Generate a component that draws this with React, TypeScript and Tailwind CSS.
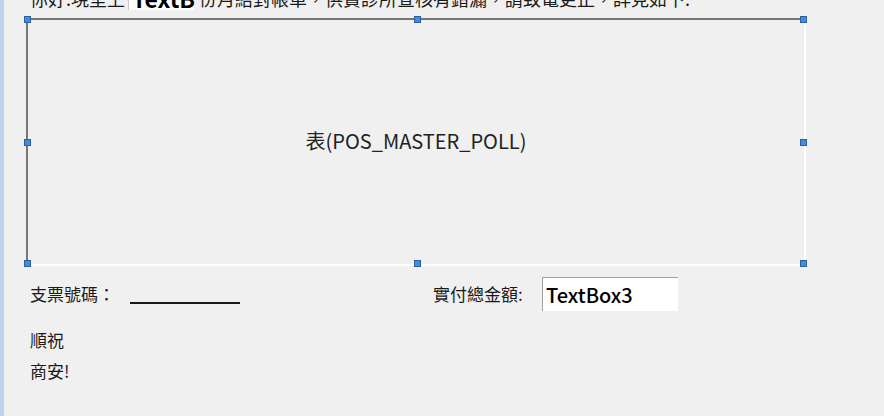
import React from "react";

const font = { fontFamily: '"Noto Sans CJK TC", "Noto Sans", sans-serif' };

function Handle({ className }: { className: string }) {
  return (
    <div
      className={`absolute w-[7px] h-[7px] bg-[#3d8ee0] border border-[#2f5f99] ${className}`}
    />
  );
}

export default function App() {
  return (
    <div
      className="w-[884px] h-[416px] bg-[#f0f0f0] flex overflow-hidden text-[#1a1a1a]"
      style={font}
    >
      <div className="w-[4px] shrink-0 bg-[#bcd3ee]" />
      <div className="flex-1 pl-[22px] flex flex-col">
        <div className="h-[18px] overflow-hidden relative">
          <div className="absolute left-[4px] top-[-14px] flex items-center text-[18px] leading-[20px] whitespace-nowrap">
            <span>你好:現呈上</span>
            <span className="ml-[3px] w-[66px] h-[24px] bg-white border-l border-[#c8c8c8] font-bold text-[23px] leading-[24px] pl-[3px] text-black">
              TextB
            </span>
            <span className="ml-[5px]">份月結對帳單，供貴診所查核有錯漏，請致電更正，詳見如下:</span>
          </div>
        </div>
        <div className="relative w-[780px] h-[248px] border-t-2 border-l-2 border-t-[#767676] border-l-[#767676] border-r-2 border-b-2 border-r-white border-b-white flex items-center justify-center">
          <span className="text-[20px] text-[#222] -mt-[2px]">表(POS_MASTER_POLL)</span>
          <Handle className="left-[-4px] top-[-4px]" />
          <Handle className="left-[386px] top-[-4px]" />
          <Handle className="right-[-3px] top-[-4px]" />
          <Handle className="left-[-4px] top-[119px]" />
          <Handle className="right-[-3px] top-[119px]" />
          <Handle className="left-[-4px] bottom-[-3px]" />
          <Handle className="left-[386px] bottom-[-3px]" />
          <Handle className="right-[-3px] bottom-[-3px]" />
        </div>
        <div className="flex items-center mt-[11px] h-[34px] pl-[4px] text-[17px]">
          <span className="w-[100px]">支票號碼：</span>
          <span className="w-[110px] h-[2px] bg-[#1a1a1a] mt-[18px]" />
          <span className="ml-[193px] w-[109px]">實付總金額:</span>
          <div className="w-[136px] h-[34px] bg-white border-t border-l border-[#a0a0a0] flex items-center pl-[3px] text-[20px] font-medium text-black">
            TextBox3
          </div>
        </div>
        <div className="pl-[4px] mt-[13px] text-[17px] leading-[31px]">
          <div>順祝</div>
          <div>商安!</div>
        </div>
      </div>
    </div>
  );
}
